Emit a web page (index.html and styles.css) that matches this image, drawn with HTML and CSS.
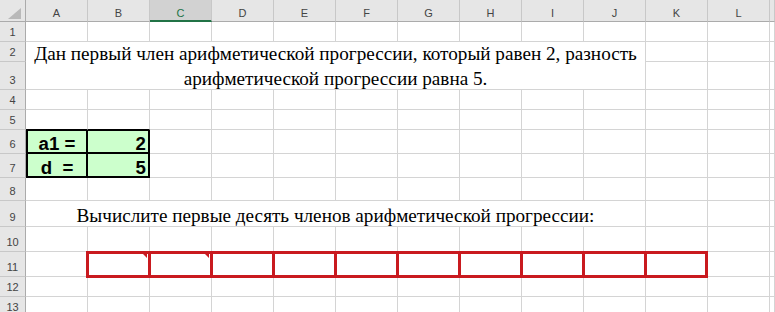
FILE: index.html
```html
<!DOCTYPE html>
<html>
<head>
<meta charset="utf-8">
<title>Арифметическая прогрессия</title>
<link rel="stylesheet" href="styles.css">
</head>
<body>
<div class="sheet">
  <div class="corner"><span class="tri"></span></div>
  <div class="ch">A</div><div class="ch">B</div><div class="ch sel">C</div><div class="ch">D</div><div class="ch">E</div><div class="ch">F</div><div class="ch">G</div><div class="ch">H</div><div class="ch">I</div><div class="ch">J</div><div class="ch">K</div><div class="ch">L</div><div class="ch"></div>

  <div class="rh">1</div>
  <div class="c"></div><div class="c"></div><div class="c"></div><div class="c"></div><div class="c"></div><div class="c"></div><div class="c"></div><div class="c"></div><div class="c"></div><div class="c"></div><div class="c"></div><div class="c"></div><div class="c"></div>

  <div class="rh">2</div>
  <div class="c merged-2"><span class="serif">Дан первый член арифметической прогрессии, который равен 2, разность<br>арифметической прогрессии равна 5.</span></div>
  <div class="c"></div><div class="c"></div><div class="c"></div>

  <div class="rh">3</div>
  <div class="c"></div><div class="c"></div><div class="c"></div>

  <div class="rh">4</div>
  <div class="c"></div><div class="c"></div><div class="c"></div><div class="c"></div><div class="c"></div><div class="c"></div><div class="c"></div><div class="c"></div><div class="c"></div><div class="c"></div><div class="c"></div><div class="c"></div><div class="c"></div>

  <div class="rh">5</div>
  <div class="c above-green"></div><div class="c above-green"></div><div class="c"></div><div class="c"></div><div class="c"></div><div class="c"></div><div class="c"></div><div class="c"></div><div class="c"></div><div class="c"></div><div class="c"></div><div class="c"></div><div class="c"></div>

  <div class="rh">6</div>
  <div class="c green first top">a1 =</div><div class="c green num top">2</div><div class="c"></div><div class="c"></div><div class="c"></div><div class="c"></div><div class="c"></div><div class="c"></div><div class="c"></div><div class="c"></div><div class="c"></div><div class="c"></div><div class="c"></div>

  <div class="rh">7</div>
  <div class="c green first">d  =</div><div class="c green num">5</div><div class="c"></div><div class="c"></div><div class="c"></div><div class="c"></div><div class="c"></div><div class="c"></div><div class="c"></div><div class="c"></div><div class="c"></div><div class="c"></div><div class="c"></div>

  <div class="rh">8</div>
  <div class="c"></div><div class="c"></div><div class="c"></div><div class="c"></div><div class="c"></div><div class="c"></div><div class="c"></div><div class="c"></div><div class="c"></div><div class="c"></div><div class="c"></div><div class="c"></div><div class="c"></div>

  <div class="rh">9</div>
  <div class="c merged-9"><span class="serif">Вычислите первые десять членов арифметической прогрессии:</span></div>
  <div class="c"></div><div class="c"></div><div class="c"></div>

  <div class="rh">10</div>
  <div class="c"></div><div class="c"></div><div class="c"></div><div class="c"></div><div class="c"></div><div class="c"></div><div class="c"></div><div class="c"></div><div class="c"></div><div class="c"></div><div class="c"></div><div class="c"></div><div class="c"></div>

  <div class="rh">11</div>
  <div class="c"></div>
  <div class="c box note"></div><div class="c box note"></div><div class="c box"></div><div class="c box"></div><div class="c box"></div><div class="c box"></div><div class="c box"></div><div class="c box"></div><div class="c box"></div><div class="c box last"></div>
  <div class="c"></div><div class="c"></div>

  <div class="rh">12</div>
  <div class="c"></div><div class="c"></div><div class="c"></div><div class="c"></div><div class="c"></div><div class="c"></div><div class="c"></div><div class="c"></div><div class="c"></div><div class="c"></div><div class="c"></div><div class="c"></div><div class="c"></div>

  <div class="rh">13</div>
  <div class="c"></div><div class="c"></div><div class="c"></div><div class="c"></div><div class="c"></div><div class="c"></div><div class="c"></div><div class="c"></div><div class="c"></div><div class="c"></div><div class="c"></div><div class="c"></div><div class="c"></div>
</div>
</body>
</html>
```
FILE: styles.css
```css
* {
  box-sizing: border-box;
}

body {
  margin: 0;
  background: #ffffff;
  overflow: hidden;
}

.sheet {
  display: grid;
  grid-template-columns: 26px repeat(12, 62px) 1fr;
  grid-template-rows: 22px 20px 20px 28px 20px 20px 24px 24px 23px 26px 25px 25px 20px 20px;
  width: 775px;
  height: 312px;
  overflow: hidden;
  font-family: "Liberation Sans", Arial, sans-serif;
}

/* headers */
.corner {
  background: #e6e6e6;
  border-right: 1px solid #ababab;
  border-bottom: 1px solid #ababab;
  display: flex;
  align-items: flex-end;
  justify-content: flex-end;
  padding: 0 4px 2px 0;
}

.tri {
  width: 0;
  height: 0;
  border-left: 13px solid transparent;
  border-bottom: 11px solid #b9b9b9;
}

.ch {
  background: #e6e6e6;
  border-right: 1px solid #c8c8c8;
  border-bottom: 1px solid #ababab;
  color: #444444;
  font-size: 11px;
  line-height: 13px;
  display: flex;
  align-items: flex-end;
  justify-content: center;
  padding-bottom: 1px;
}

.ch.sel {
  background: #d2d2d2;
  color: #217346;
  border-bottom: 2px solid #217346;
  padding-bottom: 0;
}

.rh {
  background: #e6e6e6;
  border-right: 1px solid #ababab;
  border-bottom: 1px solid #c8c8c8;
  color: #444444;
  font-size: 11px;
  line-height: 13px;
  display: flex;
  align-items: flex-end;
  justify-content: center;
  padding-bottom: 2px;
}

/* cells */
.c {
  border-right: 1px solid #d4d4d4;
  border-bottom: 1px solid #d4d4d4;
  background: #ffffff;
}

.serif {
  font-family: "Liberation Serif", "Times New Roman", serif;
  font-size: 19.2px;
  color: #000000;
  white-space: nowrap;
}

.merged-2 {
  grid-column: span 10;
  grid-row: span 2;
  display: flex;
  align-items: center;
  justify-content: center;
  text-align: center;
  line-height: 25px;
}

.merged-9 {
  grid-column: span 10;
  display: flex;
  align-items: flex-end;
  justify-content: center;
  line-height: 20px;
}

.above-green {
  border-bottom-color: #000000;
}

.green {
  background: #ccffcc;
  border-right: 2px solid #000000;
  border-bottom: 2px solid #000000;
  font-weight: bold;
  font-size: 18.67px;
  line-height: 17px;
  color: #000000;
  display: flex;
  align-items: flex-end;
  justify-content: center;
  white-space: pre;
}

.green.first {
  border-left: 2px solid #000000;
}

.green.top {
  border-top: 1px solid #000000;
}

.green.num {
  justify-content: flex-end;
  padding-right: 2px;
}

/* red answer boxes */
.box {
  position: relative;
}

.box::after {
  content: "";
  position: absolute;
  top: -1px;
  bottom: -2px;
  left: -2px;
  right: 0;
  border-top: 3px solid #c91a1f;
  border-bottom: 3px solid #c91a1f;
  border-left: 3px solid #c91a1f;
}

.box.last::after {
  right: -1px;
  border-right: 3px solid #c91a1f;
}

.note::before {
  content: "";
  position: absolute;
  top: 1px;
  right: 2px;
  width: 0;
  height: 0;
  border-top: 5px solid #c91a1f;
  border-left: 5px solid transparent;
}
```
